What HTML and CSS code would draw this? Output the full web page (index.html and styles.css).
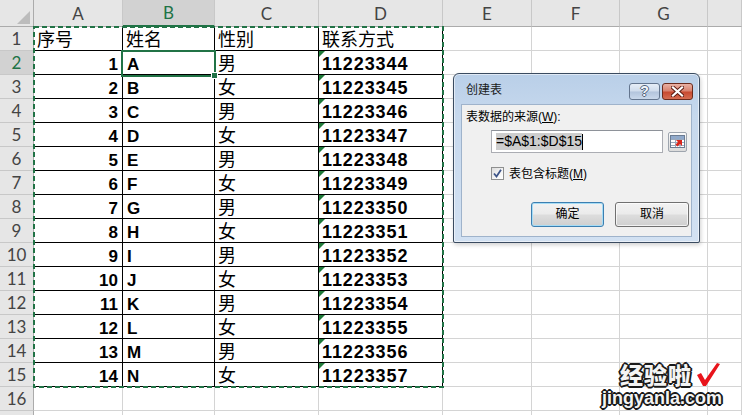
FILE: index.html
```html
<!DOCTYPE html>
<html lang="zh-CN">
<head>
<meta charset="utf-8">
<title>创建表</title>
<link rel="stylesheet" href="styles.css">
</head>
<body>
<div class="sheet">
  <div class="corner"></div>
  <div class="ch">A</div><div class="ch sel">B</div><div class="ch">C</div><div class="ch">D</div><div class="ch">E</div><div class="ch">F</div><div class="ch">G</div><div class="ch"></div>

  <div class="rh">1</div>
  <div class="c t cj">序号</div><div class="c t cj">姓名</div><div class="c t cj">性别</div><div class="c t cj">联系方式</div><div class="c"></div><div class="c"></div><div class="c"></div><div class="c"></div>

  <div class="rh sel">2</div>
  <div class="c t n">1</div><div class="c t b">A</div><div class="c t cj">男</div><div class="c t d">11223344</div><div class="c"></div><div class="c"></div><div class="c"></div><div class="c"></div>

  <div class="rh">3</div>
  <div class="c t n">2</div><div class="c t b">B</div><div class="c t cj">女</div><div class="c t d">11223345</div><div class="c"></div><div class="c"></div><div class="c"></div><div class="c"></div>

  <div class="rh">4</div>
  <div class="c t n">3</div><div class="c t b">C</div><div class="c t cj">男</div><div class="c t d">11223346</div><div class="c"></div><div class="c"></div><div class="c"></div><div class="c"></div>

  <div class="rh">5</div>
  <div class="c t n">4</div><div class="c t b">D</div><div class="c t cj">女</div><div class="c t d">11223347</div><div class="c"></div><div class="c"></div><div class="c"></div><div class="c"></div>

  <div class="rh">6</div>
  <div class="c t n">5</div><div class="c t b">E</div><div class="c t cj">男</div><div class="c t d">11223348</div><div class="c"></div><div class="c"></div><div class="c"></div><div class="c"></div>

  <div class="rh">7</div>
  <div class="c t n">6</div><div class="c t b">F</div><div class="c t cj">女</div><div class="c t d">11223349</div><div class="c"></div><div class="c"></div><div class="c"></div><div class="c"></div>

  <div class="rh">8</div>
  <div class="c t n">7</div><div class="c t b">G</div><div class="c t cj">男</div><div class="c t d">11223350</div><div class="c"></div><div class="c"></div><div class="c"></div><div class="c"></div>

  <div class="rh">9</div>
  <div class="c t n">8</div><div class="c t b">H</div><div class="c t cj">女</div><div class="c t d">11223351</div><div class="c"></div><div class="c"></div><div class="c"></div><div class="c"></div>

  <div class="rh">10</div>
  <div class="c t n">9</div><div class="c t b">I</div><div class="c t cj">男</div><div class="c t d">11223352</div><div class="c"></div><div class="c"></div><div class="c"></div><div class="c"></div>

  <div class="rh">11</div>
  <div class="c t n">10</div><div class="c t b">J</div><div class="c t cj">女</div><div class="c t d">11223353</div><div class="c"></div><div class="c"></div><div class="c"></div><div class="c"></div>

  <div class="rh">12</div>
  <div class="c t n">11</div><div class="c t b">K</div><div class="c t cj">男</div><div class="c t d">11223354</div><div class="c"></div><div class="c"></div><div class="c"></div><div class="c"></div>

  <div class="rh">13</div>
  <div class="c t n">12</div><div class="c t b">L</div><div class="c t cj">女</div><div class="c t d">11223355</div><div class="c"></div><div class="c"></div><div class="c"></div><div class="c"></div>

  <div class="rh">14</div>
  <div class="c t n">13</div><div class="c t b">M</div><div class="c t cj">男</div><div class="c t d">11223356</div><div class="c"></div><div class="c"></div><div class="c"></div><div class="c"></div>

  <div class="rh">15</div>
  <div class="c t n">14</div><div class="c t b">N</div><div class="c t cj">女</div><div class="c t d">11223357</div><div class="c"></div><div class="c"></div><div class="c"></div><div class="c"></div>

  <div class="rh">16</div>
  <div class="c"></div><div class="c"></div><div class="c"></div><div class="c"></div><div class="c"></div><div class="c"></div><div class="c"></div><div class="c"></div>

  <div class="rh"></div>
  <div class="c"></div><div class="c"></div><div class="c"></div><div class="c"></div><div class="c"></div><div class="c"></div><div class="c"></div><div class="c"></div>
</div>

<svg class="ants" width="411" height="362" viewBox="0 0 411 362">
  <rect x="1" y="1" width="409" height="360" fill="none" stroke="#217346" stroke-width="2" stroke-dasharray="5 3"/>
</svg>
<div class="selbox"></div>
<div class="handle"></div>

<div class="dlg">
  <div class="dlg-title">
    <span class="dlg-name">创建表</span>
    <span class="tb help">?</span>
    <span class="tb close">
      <svg width="13" height="11" viewBox="0 0 13 11">
        <path d="M2 1.5 L11 9.5 M11 1.5 L2 9.5" stroke="#5a1a10" stroke-width="4" stroke-linecap="square"/>
        <path d="M2 1.5 L11 9.5 M11 1.5 L2 9.5" stroke="#ffffff" stroke-width="2.2" stroke-linecap="square"/>
      </svg>
    </span>
  </div>
  <div class="dlg-body">
    <div class="lbl">表数据的来源(<u>W</u>):</div>
    <div class="inrow">
      <div class="input"><span class="hl">=$A$1:$D$15</span><span class="caret"></span></div>
      <div class="refbtn">
        <svg width="15" height="13" viewBox="0 0 15 13">
          <rect x="0.5" y="0.5" width="14" height="12" fill="#ffffff" stroke="#6b7c93"/>
          <rect x="1" y="1" width="13" height="3" fill="#8fa9cc"/>
          <path d="M1 4.5 H14 M1 7.5 H14 M1 10.5 H14 M5.5 1 V12 M10 1 V12" stroke="#9aa9bd" stroke-width="1"/>
          <path d="M6 5 L12 5 L12 11 L10 9 L7.5 11.5 L5.5 9.5 L8 7 Z" fill="#d8261c"/>
        </svg>
      </div>
    </div>
    <div class="chkrow">
      <span class="chk">
        <svg width="11" height="11" viewBox="0 0 11 11">
          <path d="M2 5.5 L4.5 8.5 L9 1.8" fill="none" stroke="#3d5488" stroke-width="1.8"/>
        </svg>
      </span>
      <span class="chklbl">表包含标题(<u>M</u>)</span>
    </div>
    <div class="btns">
      <div class="btn def">确定</div>
      <div class="btn">取消</div>
    </div>
  </div>
</div>

<div class="wm">
  <div class="wm1"><span class="wmcn">经验啦</span><svg class="tick" width="26" height="26" viewBox="0 0 26 26"><path d="M2 14 L6 12 L10 19 L22 2 L25 3 L11 25 L8 25 Z" fill="#e8141b"/></svg></div>
  <div class="wm2">jingyanla.com</div>
</div>
</body>
</html>
```
FILE: styles.css
```css
* { box-sizing: border-box; }
html, body { margin: 0; padding: 0; }
body {
  width: 742px;
  height: 415px;
  overflow: hidden;
  background: #ffffff;
  position: relative;
  font-family: "Liberation Sans", "Noto Sans CJK SC", sans-serif;
  color: #000;
}

.sheet {
  display: grid;
  grid-template-columns: 34px 89px 92px 104px 124px 89px 88px 88px 34px;
  grid-template-rows: 27px repeat(17, 24px);
  height: 415px;
  overflow: hidden;
}

.corner {
  background: #e6e6e6;
  border-right: 1px solid #ababab;
  border-bottom: 1px solid #ababab;
  position: relative;
}
.corner::after {
  content: "";
  position: absolute;
  right: 3px;
  bottom: 2px;
  border-left: 13px solid transparent;
  border-bottom: 13px solid #bcbcbc;
}

.ch {
  background: #e6e6e6;
  border-right: 1px solid #c8c8c8;
  border-bottom: 1px solid #ababab;
  font-family: "Lato", "Liberation Sans", sans-serif;
  font-size: 17px;
  color: #444;
  text-align: center;
  line-height: 27px;
}
.ch.sel {
  background: #d2d2d2;
  color: #217346;
  border-bottom: 2px solid #217346;
  line-height: 26px;
}

.rh {
  background: #e6e6e6;
  border-right: 1px solid #ababab;
  border-bottom: 1px solid #c8c8c8;
  font-family: "Lato", "Liberation Sans", sans-serif;
  font-size: 17px;
  color: #444;
  text-align: center;
  line-height: 24px;
}
.rh.sel {
  background: #d2d2d2;
  color: #217346;
}

.c {
  border-right: 1px solid #d4d4d4;
  border-bottom: 1px solid #d4d4d4;
  padding: 4px 3px 0 3px;
  line-height: 19px;
  font-size: 17px;
  white-space: nowrap;
  overflow: hidden;
}
.t { border-right-color: #000; border-bottom-color: #000; }
.cj { font-size: 18px; padding-left: 3px; }
.n { text-align: right; font-weight: bold; padding-right: 4px; }
.b { font-weight: bold; padding-left: 4px; }
.d {
  font-weight: bold;
  font-size: 18px;
  letter-spacing: 0.9px;
  position: relative;
  padding-left: 3px;
}
.d::before {
  content: "";
  position: absolute;
  left: 0;
  top: 0;
  border-top: 6px solid #1f7a3a;
  border-right: 6px solid transparent;
}

.ants {
  position: absolute;
  left: 33px;
  top: 26px;
}
.selbox {
  position: absolute;
  left: 121px;
  top: 50px;
  width: 95px;
  height: 27px;
  border: 2px solid #217346;
}
.handle {
  position: absolute;
  left: 211px;
  top: 72px;
  width: 7px;
  height: 7px;
  background: #217346;
  border: 1px solid #ffffff;
}

/* dialog */
.dlg {
  position: absolute;
  left: 453px;
  top: 73px;
  width: 247px;
  height: 170px;
  border: 1px solid #3a4b60;
  border-radius: 6px 6px 2px 2px;
  background: linear-gradient(180deg, #b9cfe8 0%, #c6d8ed 25%, #d2e1f2 100%);
  box-shadow: inset 0 0 0 1px rgba(255,255,255,0.55), 1px 2px 4px rgba(0,0,0,0.18);
  font-family: "Liberation Sans", "Noto Sans CJK SC", sans-serif;
  font-size: 12px;
  display: flex;
  flex-direction: column;
}
.dlg-title {
  height: 30px;
  display: flex;
  align-items: flex-start;
  padding: 0 6px 0 12px;
}
.dlg-name {
  margin-top: 7px;
  line-height: 18px;
  color: #1b1b1b;
}
.tb {
  margin-top: 9px;
  width: 31px;
  height: 17px;
  border-radius: 3px;
  display: flex;
  align-items: center;
  justify-content: center;
}
.help {
  margin-left: auto;
  margin-right: 2px;
  border: 1px solid #63758e;
  background: linear-gradient(180deg, #e6eef7 0%, #cfdcec 48%, #b2c4dc 52%, #c9d8eb 100%);
  color: #f4f7fb;
  font-weight: bold;
  font-size: 14px;
  line-height: 15px;
  text-shadow: -1px 0 #52647c, 1px 0 #52647c, 0 -1px #52647c, 0 1px #52647c;
}
.close {
  border: 1px solid #6b2a1c;
  background: linear-gradient(180deg, #eab1a4 0%, #d98370 45%, #c84a31 55%, #d56d52 100%);
}

.dlg-body {
  margin: 0 7px 5px 7px;
  flex: 1;
  background: #f0f0f0;
  border: 1px solid #9fb3cb;
  display: flex;
  flex-direction: column;
}
.lbl {
  margin: 3px 0 0 4px;
  line-height: 18px;
  color: #000;
}
.inrow {
  display: flex;
  align-items: center;
  margin: 4px 0 0 29px;
}
.input {
  width: 172px;
  height: 23px;
  background: #ffffff;
  border: 1px solid #abadb3;
  border-top-color: #8e9299;
  padding-left: 4px;
  display: flex;
  align-items: center;
  font-family: "Liberation Sans", sans-serif;
  font-size: 14px;
}
.hl {
  background: #cdcdcd;
  line-height: 17px;
}
.caret {
  width: 1px;
  height: 16px;
  background: #000;
}
.refbtn {
  margin-left: 5px;
  width: 19px;
  height: 20px;
  border: 1px solid #9ea5ae;
  border-radius: 2px;
  background: linear-gradient(180deg, #fbfbfb 0%, #e9e9e9 50%, #dcdcdc 100%);
  display: flex;
  align-items: center;
  justify-content: center;
}
.chkrow {
  display: flex;
  align-items: center;
  margin: 14px 0 0 29px;
  height: 13px;
}
.chk {
  width: 13px;
  height: 13px;
  border: 1px solid #8e8f8f;
  background: linear-gradient(135deg, #dcdcdc 0%, #f6f6f6 60%, #ffffff 100%);
  display: flex;
  align-items: center;
  justify-content: center;
}
.chklbl {
  margin-left: 5px;
  line-height: 16px;
}
.btns {
  display: flex;
  justify-content: flex-end;
  gap: 11px;
  margin-top: 22px;
  padding-right: 2px;
}
.btn {
  width: 74px;
  height: 25px;
  border: 1px solid #707070;
  border-radius: 3px;
  background: linear-gradient(180deg, #f2f2f2 0%, #ebebeb 48%, #dddddd 52%, #cfcfcf 100%);
  box-shadow: inset 0 0 0 1px rgba(255,255,255,0.7);
  text-align: center;
  line-height: 23px;
  color: #000;
}
.btn.def {
  width: 73px;
  border-color: #3c7fb1;
  box-shadow: inset 0 0 0 1px #a6dcf5;
}

/* watermark */
.wm {
  position: absolute;
  left: 598px;
  top: 359px;
  width: 132px;
  color: #f4f4f4;
  text-shadow:
    -1px -1px 0 #1a1a1a, 1px -1px 0 #1a1a1a, -1px 1px 0 #1a1a1a, 1px 1px 0 #1a1a1a,
    0 -2px 0 #1a1a1a, 0 2px 0 #1a1a1a, -2px 0 0 #1a1a1a, 2px 0 0 #1a1a1a;
}
.wm1 {
  display: flex;
  align-items: center;
  padding-left: 22px;
  height: 30px;
}
.wmcn {
  font-family: "Noto Sans CJK SC", sans-serif;
  font-weight: 900;
  font-size: 23px;
  line-height: 28px;
  letter-spacing: 1px;
}
.tick {
  margin-left: 3px;
}
.wm2 {
  font-family: "Liberation Sans", sans-serif;
  font-weight: bold;
  font-size: 18px;
  line-height: 19px;
  padding-left: 4px;
}
```
